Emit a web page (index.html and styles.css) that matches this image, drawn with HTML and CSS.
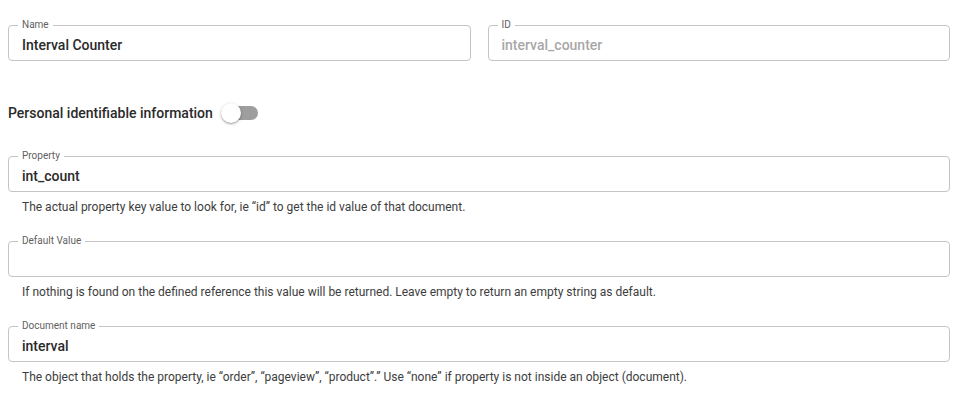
FILE: index.html
```html
<!DOCTYPE html>
<html lang="en">
<head>
<meta charset="utf-8">
<title>Interval Counter</title>
<link rel="stylesheet" href="styles.css">
</head>
<body>
<form class="form">
  <div class="row">
    <fieldset class="field">
      <legend class="field-label">Name</legend>
      <input class="field-input" type="text" value="Interval Counter">
    </fieldset>
    <fieldset class="field field-disabled">
      <legend class="field-label">ID</legend>
      <input class="field-input" type="text" value="interval_counter" disabled>
    </fieldset>
  </div>

  <label class="toggle-row">
    <span class="toggle-text">Personal identifiable information</span>
    <span class="switch"><span class="switch-track"></span><span class="switch-thumb"></span></span>
  </label>

  <div class="group">
    <fieldset class="field">
      <legend class="field-label">Property</legend>
      <input class="field-input" type="text" value="int_count">
    </fieldset>
    <p class="helper">The actual property key value to look for, ie “id” to get the id value of that document.</p>
  </div>

  <div class="group">
    <fieldset class="field">
      <legend class="field-label">Default Value</legend>
      <input class="field-input" type="text" value="">
    </fieldset>
    <p class="helper">If nothing is found on the defined reference this value will be returned. Leave empty to return an empty string as default.</p>
  </div>

  <div class="group">
    <fieldset class="field">
      <legend class="field-label">Document name</legend>
      <input class="field-input" type="text" value="interval">
    </fieldset>
    <p class="helper">The object that holds the property, ie “order”, “pageview”, “product”.” Use “none” if property is not inside an object (document).</p>
  </div>
</form>
</body>
</html>
```

FILE: styles.css
```css
* { box-sizing: border-box; }
html, body { margin: 0; background: #fff; }
body {
  font-family: Roboto, "Liberation Sans", Arial, sans-serif;
  color: #1f1f1f;
}
.form {
  padding: 19px 16px 0 8px;
  display: flex;
  flex-direction: column;
}
.row {
  display: flex;
  gap: 17px;
}
.row .field { flex: 1 1 0; }
.field {
  margin: 0;
  padding: 0 13px 3px;
  border: 1px solid #c4c4c4;
  border-radius: 4px;
  min-width: 0;
  height: 42px;
}
.field-label {
  margin-left: -4px;
  padding: 0 4px;
  font-size: 10px;
  line-height: 12px;
  color: #5f5f5f;
}
.field-input {
  display: block;
  width: 100%;
  height: 27px;
  border: 0;
  padding: 0;
  margin: 0;
  outline: none;
  background: transparent;
  font-family: inherit;
  font-size: 14px;
  font-weight: 500;
  color: #2a2a2a;
}
.field-input:disabled { color: #a8a8a8; }
.toggle-row {
  display: flex;
  align-items: center;
  gap: 8px;
  height: 20px;
  margin-top: 42px;
  margin-bottom: 27px;
}
.toggle-text {
  font-size: 14px;
  font-weight: 500;
  color: #2a2a2a;
}
.switch {
  position: relative;
  width: 37px;
  height: 20px;
  display: flex;
  align-items: center;
}
.switch-track {
  display: block;
  width: 34px;
  height: 14px;
  margin-left: 3px;
  border-radius: 7px;
  background: #9e9e9e;
}
.switch-thumb {
  position: absolute;
  left: 0;
  top: 0;
  width: 20px;
  height: 20px;
  border-radius: 50%;
  background: #fff;
  box-shadow: 0 1px 3px rgba(0,0,0,.3), 0 1px 1px rgba(0,0,0,.14);
}
.group { margin-bottom: 20px; }
.helper {
  margin: 7px 0 0 14px;
  font-size: 12px;
  line-height: 16px;
  color: #3d3d3d;
}
```
